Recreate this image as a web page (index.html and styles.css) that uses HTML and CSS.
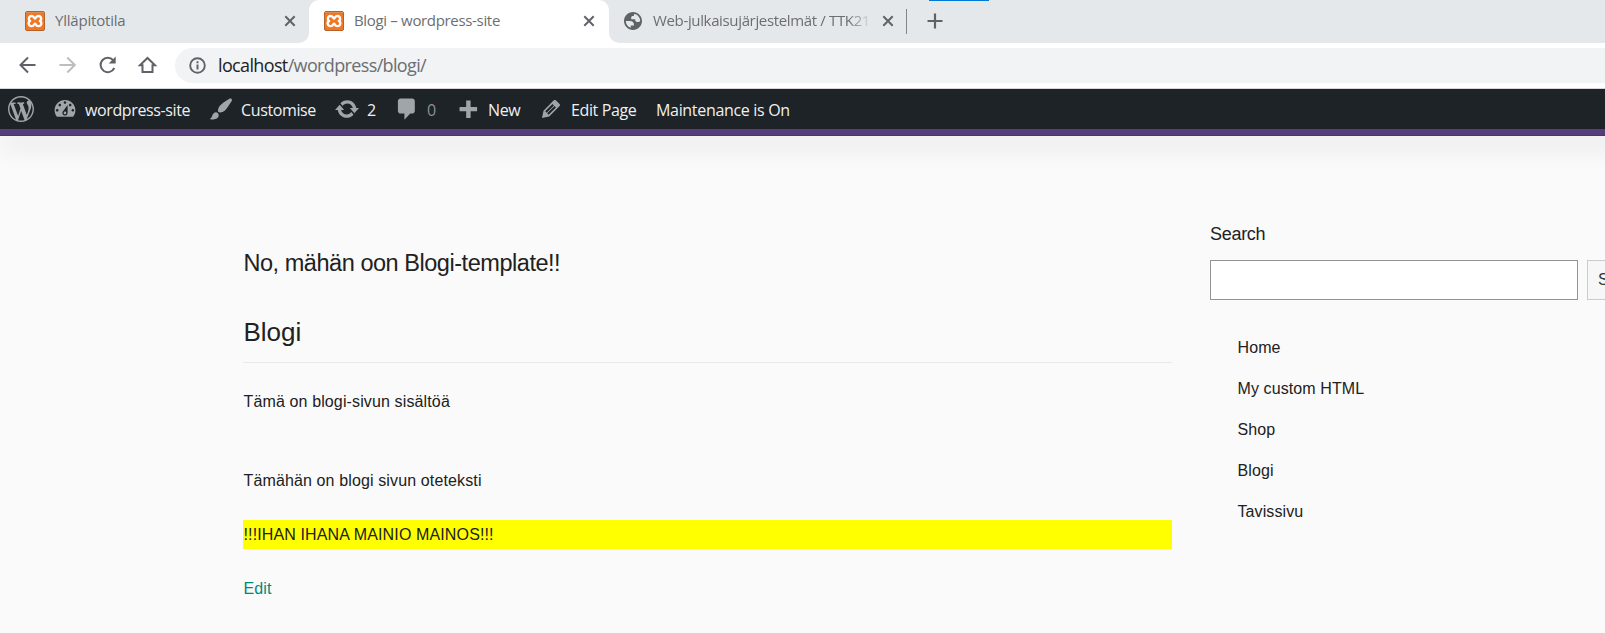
FILE: index.html
```html
<!DOCTYPE html>
<html lang="fi">
<head>
<meta charset="utf-8">
<title>Blogi – wordpress-site</title>
<link rel="stylesheet" href="styles.css">
</head>
<body>
<svg class="defs" width="0" height="0">
  <symbol id="xampp" viewBox="0 0 20 20">
    <rect x=".5" y=".5" width="19" height="19" rx="1.500" fill="#f37623" stroke="#b5632c"/>
    <path d="M1 1.500h18" stroke="#dc8e58" stroke-width="1"/>
    <path d="M10 7.600C9.200 7.600 9.400 5 6.600 5C3.600 5 3 8.800 5.200 10C2.600 11.200 3.400 15.200 6.600 15.200C9.400 15.200 9.200 12.600 10 12.600C10.800 12.600 10.600 15.200 13.400 15.200C16.600 15.200 17.400 11.200 14.800 10C17 8.800 16.400 5 13.400 5C10.600 5 10.800 7.600 10 7.600z" fill="none" stroke="#fff" stroke-width="2.300" stroke-linejoin="round"/>
  </symbol>
  <symbol id="close" viewBox="0 0 12 12"><path d="M1.300 1.300l9.400 9.400M10.700 1.300l-9.400 9.400" stroke="#5f6368" stroke-width="2"/></symbol>
</svg>
<header class="tabs">
  <div class="tab first"><svg class="fav"><use href="#xampp"/></svg><span class="t1">Ylläpitotila</span><svg class="close"><use href="#close"/></svg></div>
  <div class="tab active"><svg class="fav"><use href="#xampp"/></svg><span class="t2">Blogi – wordpress-site</span><svg class="close"><use href="#close"/></svg></div>
  <div class="tab third"><svg class="globe" viewBox="2 2 20 20"><path fill="#5f6368" d="M12 2C6.480 2 2 6.480 2 12s4.480 10 10 10 10-4.480 10-10S17.520 2 12 2zM4 12h4.400c3.410.020 4.950 1.730 4.600 5.130H9.500v2.470C6.300 18.600 4 15.600 4 12zM20 12.100c-1 .9-1.200.9-1.900.9h-1.600c-1.300 0-2-.7-2-2v-1H10V8.400c0-1.200.7-1.900 2-1.900h1V5.300c0-.4.300-.8.600-1C17.300 5 20 8.200 20 12.100z"/></svg><span class="t3">Web-julkaisujärjestelmät / TTK21</span><svg class="close"><use href="#close"/></svg></div>
  <i class="sep"></i>
  <svg class="newtab" viewBox="0 0 16 16"><path d="M8 .5v15M.5 8h15" stroke="#5f6368" stroke-width="2.200"/></svg>
  <i class="blue"></i>
</header>
<nav class="toolbar">
  <svg class="nav" viewBox="0 0 20 20"><path d="M17.500 10H3M10 2.500L2.500 10l7.500 7.500" fill="none" stroke="#5f6368" stroke-width="2"/></svg>
  <svg class="nav" viewBox="0 0 20 20"><path d="M1.500 10h15M9.300 2.500l7.500 7.500-7.500 7.500" fill="none" stroke="#bcbec1" stroke-width="2"/></svg>
  <svg class="nav" viewBox="0 0 20 20"><path d="M16.300 13A7.200 7.200 0 1 1 15.200 5.200" fill="none" stroke="#5f6368" stroke-width="2"/><path d="M17.700 1.500v7h-7z" fill="#5f6368"/></svg>
  <svg class="nav" viewBox="0 0 20 20"><path d="M2 10.300h2.500V17h10v-6.700H17L9.500 3z" fill="none" stroke="#5f6368" stroke-width="2"/></svg>
  <div class="omnibox">
    <svg class="info" viewBox="0 0 17 17"><circle cx="8.500" cy="8.500" r="7.300" fill="none" stroke="#5f6368" stroke-width="1.900"/><path d="M8.500 7.500v5M8.500 4.200v2" stroke="#5f6368" stroke-width="2"/></svg>
    <span class="url"><b>localhost</b>/wordpress/blogi/</span>
  </div>
</nav>
<nav class="admin">
  <svg class="ic wp" viewBox="0 0 20 20"><path d="M20 10c0-5.510-4.490-10-10-10C4.480 0 0 4.490 0 10c0 5.520 4.480 10 10 10 5.510 0 10-4.480 10-10zM7.780 15.370L4.370 6.220c.55-.020 1.170-.080 1.170-.080.5-.060.440-1.130-.060-1.110 0 0-1.450.110-2.370.110-.180 0-.370 0-.580-.010C4.120 2.690 6.870 1.110 10 1.110c2.330 0 4.450.870 6.050 2.340-.680-.110-1.650.390-1.650 1.580 0 .740.450 1.360.9 2.100.350.610.550 1.360.550 2.460 0 1.490-1.400 5-1.400 5l-3.030-8.370c.540-.020.820-.170.820-.170.5-.050.440-1.250-.060-1.220 0 0-1.440.120-2.380.120-.870 0-2.330-.120-2.330-.120-.5-.030-.560 1.200-.060 1.220l.920.080 1.260 3.410zM17.410 10c.240-.640.740-1.870.430-4.250.7 1.290 1.050 2.710 1.050 4.250 0 3.290-1.730 6.240-4.400 7.780.970-2.590 1.940-5.200 2.920-7.780zM6.100 18.090C3.120 16.650 1.110 13.530 1.110 10c0-1.300.230-2.480.720-3.590C3.250 10.300 4.670 14.200 6.100 18.090zm4.030-6.630l2.580 6.980c-.860.290-1.760.450-2.710.450-.790 0-1.570-.110-2.290-.330.810-2.380 1.620-4.740 2.420-7.100z"/></svg>
  <a class="a1"><svg class="ic" viewBox="0 0 20 20"><path d="M3.760 16h12.480c1.100-1.370 1.760-3.110 1.760-5 0-4.420-3.580-8-8-8s-8 3.580-8 8c0 1.890.660 3.630 1.760 5zM10 4c.550 0 1 .450 1 1s-.450 1-1 1-1-.450-1-1 .450-1 1-1zM6 6c.550 0 1 .450 1 1s-.450 1-1 1-1-.450-1-1 .450-1 1-1zm8 0c.550 0 1 .450 1 1s-.450 1-1 1-1-.450-1-1 .450-1 1-1zm-5.370 5.550L12 7v6c0 1.100-.9 2-2 2s-2-.9-2-2c0-.570.240-1.080.630-1.450zM4 10c.550 0 1 .450 1 1s-.450 1-1 1-1-.450-1-1 .450-1 1-1zm12 0c.550 0 1 .450 1 1s-.450 1-1 1-1-.450-1-1 .450-1 1-1zm-5 3c0-.550-.450-1-1-1s-1 .450-1 1 .450 1 1 1 1-.450 1-1z"/></svg><span>wordpress-site</span></a>
  <a class="a2"><svg class="ic" viewBox="0 0 20 20"><path d="M18.330 3.570s.270-.8-.310-1.360c-.530-.520-1.220-.240-1.220-.240-.610.3-5.760 3.470-7.670 5.570-.860.960-2.060 3.790-1.090 4.820.920.980 3.960-.170 4.790-1 2.060-2.060 5.210-7.170 5.500-7.790zM1.400 17.650c2.370-1.560 1.460-3.410 3.230-4.640.930-.650 2.220-.620 3.080.290.630.670.8 2.570-.160 3.460-1.570 1.450-4 1.550-6.150.890z"/></svg><span>Customise</span></a>
  <a class="a3"><svg class="ic" viewBox="0 0 20 20"><path d="M10.200 3.280c3.530 0 6.430 2.610 6.920 6h2.080l-3.500 4-3.500-4h2.320c-.450-1.970-2.210-3.450-4.320-3.450-1.450 0-2.730.710-3.540 1.780L4.950 5.660C6.230 4.200 8.110 3.280 10.200 3.280zm-.4 13.440c-3.520 0-6.430-2.610-6.920-6H.8l3.500-4c1.170 1.330 2.330 2.670 3.500 4H5.480c.450 1.970 2.210 3.450 4.320 3.450 1.450 0 2.730-.710 3.540-1.780l1.710 1.950c-1.280 1.460-3.150 2.380-5.250 2.380z"/></svg><span>2</span></a>
  <a class="a4"><svg class="ic" viewBox="0 0 20 20"><path d="M5 2h9c1.100 0 2 .9 2 2v7.500c0 1.100-.9 2-2 2h-1.500L8 18.200v-4.700H5c-1.100 0-2-.9-2-2V4c0-1.100.9-2 2-2z"/></svg><span>0</span></a>
  <a class="a5"><svg class="ic" viewBox="0 0 20 20"><path d="M17 8.500v3.200h-5V17H8.600v-5.300H3.500V8.500h5.100V3.500H12v5z"/></svg><span>New</span></a>
  <a class="a6"><svg class="ic" viewBox="0 0 20 20"><path d="M13.890 3.390l2.710 2.720c.460.460.420 1.240.030 1.640l-8.010 8.020-5.560 1.160 1.160-5.580s7.600-7.630 7.990-8.030c.390-.390 1.220-.390 1.680.070zm-2.730 2.790l-5.590 5.610 1.110 1.110 5.540-5.650zm-2.970 8.230l5.580-5.600-1.070-1.080-5.590 5.600z"/></svg><span>Edit Page</span></a>
  <a class="a7"><span>Maintenance is On</span></a>
</nav>
<div class="stripe"></div>
<div class="page">
  <main>
    <h3>No, mähän oon Blogi-template!!</h3>
    <h2>Blogi</h2>
    <p class="p1">Tämä on blogi-sivun sisältöä</p>
    <p class="p2">Tämähän on blogi sivun oteteksti</p>
    <p class="ad">!!!IHAN IHANA MAINIO MAINOS!!!</p>
    <p class="edit">Edit</p>
  </main>
  <aside>
    <label>Search</label>
    <div class="form"><div class="field"></div><div class="button">S</div></div>
    <ul><li>Home</li><li>My custom HTML</li><li>Shop</li><li>Blogi</li><li>Tavissivu</li></ul>
  </aside>
</div>
</body>
</html>
```
FILE: styles.css
```css
* { box-sizing: border-box; }
body { margin: 0; width: 1605px; height: 633px; overflow: hidden; background: #fafafa; color: #212121; font: 16px/28px "Liberation Sans", Arial, sans-serif; }
.defs { position: absolute; }
svg { flex: none; display: block; }

/* browser tabs */
.tabs { position: relative; display: flex; height: 43px; background: linear-gradient(#e5e8eb, #e5e8eb) no-repeat 0 0 / 100% 20px, #fff; font: 15px/41px "Open Sans", "Noto Sans", sans-serif; color: #6b6e72; }
.tabs::after { content: ""; position: absolute; left: 609px; right: 0; top: 0; bottom: 0; background: #e5e8eb; border-bottom-left-radius: 10px; }
.tab { position: relative; display: flex; height: 43px; align-items: center; white-space: nowrap; }
.tab .close { width: 12px; height: 12px; margin: 0 0 1px auto; }
.tab span { height: 43px; }
.first { width: 309px; padding: 0 13px 0 25px; background: #e5e8eb; border-bottom-right-radius: 10px; }
.active { width: 300px; padding: 0 14px 0 15px; }
.active::before { content: ""; position: absolute; inset: 0 0 10px 0; background: #fff; border-radius: 10px 10px 0 0; }
.active > * { position: relative; }
.third { width: 297px; padding: 0 12px 0 15px; }
.third, .sep, .newtab, .blue { z-index: 1; }
.sep, .newtab { position: relative; }
.fav { width: 20px; height: 20px; margin: 0 10px 1px 0; }
.globe { width: 18px; height: 18px; margin: 0 11px 1px 0; }
.t1 { letter-spacing: -.2px; }
.t2 { letter-spacing: -.33px; }
.tab .t3 { width: 219px; overflow: hidden; letter-spacing: -.35px; -webkit-mask: linear-gradient(90deg, #000 195px, transparent 219px); mask: linear-gradient(90deg, #000 195px, transparent 219px); }
.sep { width: 1px; height: 25px; margin-top: 9px; background: #80868b; }
.newtab { width: 16px; height: 16px; margin: 13px 0 0 20px; }
.blue { position: absolute; left: 929px; top: 0; width: 60px; height: 1px; background: #0078d7; }

/* browser toolbar */
.toolbar { display: flex; align-items: center; height: 46px; padding: 0 0 1px 18px; gap: 20px; background: #fff; border-bottom: 1px solid #d5d7da; }
.nav { width: 20px; height: 20px; }
.omnibox { display: flex; align-items: center; flex: 1; height: 35px; margin-left: -3px; padding-left: 14px; border-radius: 18px 0 0 18px; background: #f1f3f4; }
.info { width: 17px; height: 17px; margin-right: 12px; }
.url { font: 18px/35px "Open Sans", "Noto Sans", sans-serif; letter-spacing: -.64px; color: #6b6e72; }
.url b { font-weight: 400; color: #202124; }

/* WordPress admin bar */
.admin { display: flex; align-items: center; height: 40px; padding-left: 8px; background: #1d2327; color: #f0f0f1; font: 500 16px/40px "Open Sans", "Noto Sans", sans-serif; white-space: nowrap; }
.admin a { display: flex; align-items: center; gap: 7px; }
.admin a span { padding-top: 2px; letter-spacing: -.37px; }
.ic { width: 26px; height: 26px; fill: #a0a5aa; }
.a1 { width: 156px; margin-left: 18px; }
.a2 { width: 126px; }
.a3 { width: 60px; }
.a4 { width: 61px; }
.a5 { width: 83px; }
.a6 { width: 118px; }
.a4 span { color: #8c8f94; }
.admin .a7 span { letter-spacing: -.32px; }

/* page */
.stripe { width: 1650px; height: 7px; background: #563d7c; border-bottom: 1px solid #4c3372; box-shadow: 0 8px 26px rgba(0,0,0,.16); clip-path: inset(0 0 -60px 0); }
.page { display: flex; }
main { width: 929px; margin-left: 243px; padding-top: 108px; }
h3, h2, p, ul { margin: 0; font-weight: 400; }
h3 { font-size: 23.5px; line-height: 38px; letter-spacing: -.46px; text-indent: .5px; }
h2 { margin-top: 30px; height: 51px; border-bottom: 1px solid #e9e9e9; font-size: 26px; line-height: 40px; text-indent: .5px; }
p { letter-spacing: .13px; text-indent: .5px; }
.p1 { margin-top: 25px; }
.p2 { margin-top: 51px; }
.ad { margin-top: 25px; height: 29px; line-height: 29px; background: #ff0; }
.edit { margin-top: 26px; color: #00897b; }
aside { width: 395px; margin-left: 38px; padding-top: 84px; }
label { display: block; height: 40px; font-size: 18px; line-height: 28px; letter-spacing: -.3px; }
.form { display: flex; gap: 9px; height: 40px; }
.field { width: 368px; flex: none; border: 1px solid #949494; background: #fff; }
.button { flex: none; width: 80px; padding-left: 10px; border: 1px solid #ccc; background: #f7f7f7; line-height: 38px; color: #32373c; }
ul { padding: 27px 0 0 27.5px; list-style: none; letter-spacing: .1px; }
li { height: 41px; line-height: 41px; }
```
